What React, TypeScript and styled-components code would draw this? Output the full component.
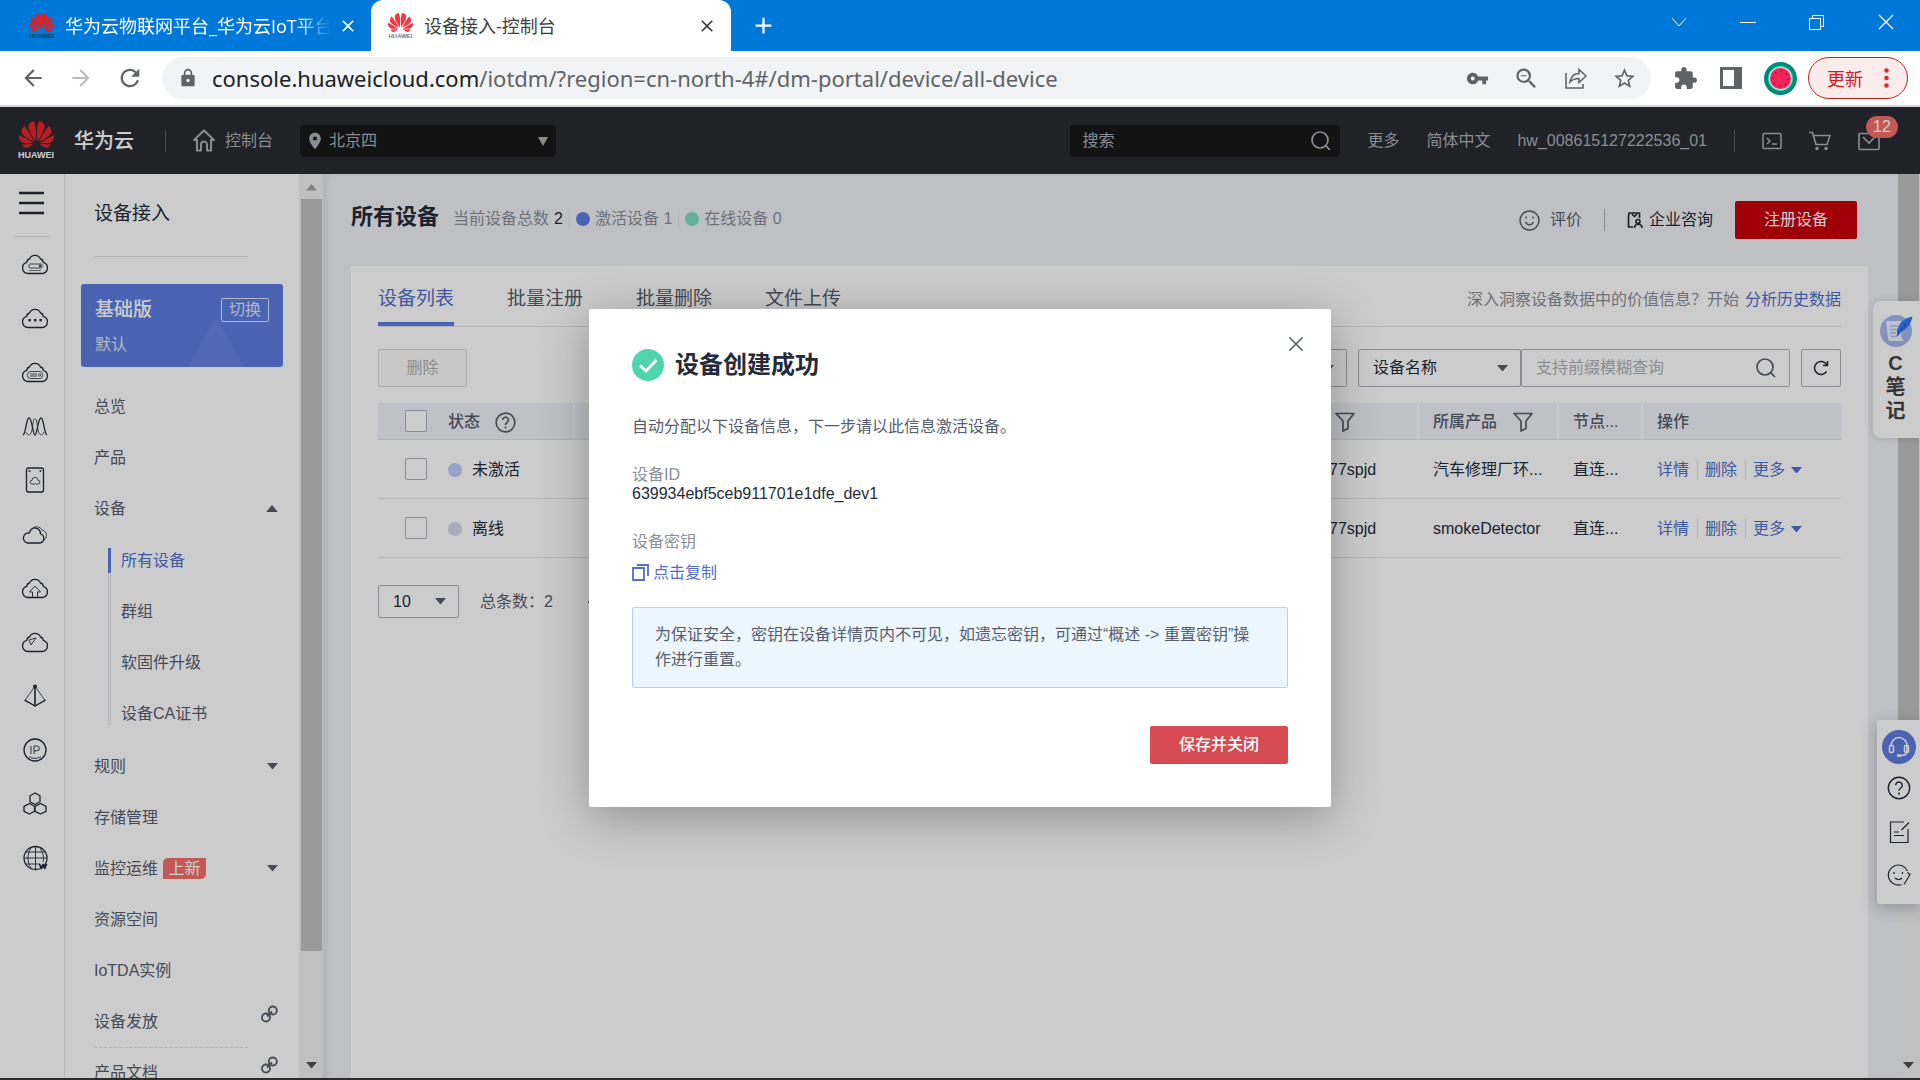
import React from 'react';
import styled, { createGlobalStyle } from 'styled-components';
import { MdVpnKey, MdStarOutline, MdExtension, MdLock, MdArrowBack, MdArrowForward, MdRefresh, MdOutlineZoomOut, MdLocationOn, MdClose, MdAdd } from 'react-icons/md';
import { SiHuawei } from 'react-icons/si';

const color = {
  ink: '#252b3a',
  text: '#575d6c',
  muted: '#8a8e99',
  line: '#dfe1e6',
  border: '#adb0b8',
  brand: '#5e7ce0',
  link: '#526ecc',
  red: '#c7000b',
  canvas: '#eff1f6',
  nav: '#282b33',
  navText: '#adb0b8',
};

const Global = createGlobalStyle`
  * { box-sizing: border-box; }
  body {
    margin: 0;
    overflow: hidden;
    font-family: "Liberation Sans", Arial, "Noto Sans CJK SC", sans-serif;
    font-size: 16px;
    line-height: 20px;
    color: ${color.text};
  }
  button, input, select { font: inherit; color: inherit; }
  button { margin: 0; padding: 0; border: 0; background: none; cursor: pointer; }
  a { color: inherit; text-decoration: none; }
  h1, h2, p, ul, dl, dd { margin: 0; padding: 0; }
  ul { list-style: none; }
  svg { display: block; flex: none; }
`;

const Page = styled.div`
  display: flex;
  flex-direction: column;
  height: 100vh;
  background: #2b2b2b;
  padding-bottom: 2px;
`;

/* ---------- browser chrome ---------- */
const TabStrip = styled.div`
  flex: none;
  display: flex;
  height: 51px;
  background: #0078d9;
  color: #fff;
  font-family: "Open Sans", "Noto Sans CJK SC", sans-serif;
  font-size: 18px;
`;
const BrowserTab = styled.div<{ $active?: boolean }>`
  display: flex;
  align-items: center;
  width: ${p => (p.$active ? 360 : 371)}px;
  padding: 0 ${p => (p.$active ? 14 : 13)}px 0 ${p => (p.$active ? 17 : 29)}px;
  border-radius: 12px 12px 0 0;
  background: ${p => (p.$active ? '#fff' : 'transparent')};
  color: ${p => (p.$active ? '#3c4043' : '#fff')};
`;
const TabTitle = styled.span<{ $fade?: boolean }>`
  flex: 1;
  min-width: 0;
  margin: 0 8px 0 11px;
  overflow: hidden;
  white-space: nowrap;
  line-height: 28px;
  ${p => p.$fade && 'mask-image: linear-gradient(90deg, #000 88%, transparent);'}
`;
const Favicon = styled.span<{ $dark?: boolean }>`
  display: flex;
  flex-direction: column;
  align-items: center;
  width: 25px;
  color: ${p => (p.$dark ? '#e02020' : '#f8343f')};
  font: bold 6px/6px "Liberation Sans", Arial, sans-serif;
  svg { margin: -3px 0 -2px; }
  span { color: ${p => (p.$dark ? '#123a66' : '#777')}; }
`;
const NewTab = styled.button`
  width: 64px;
  display: grid;
  place-items: center;
`;
const WindowControls = styled.div`
  margin-left: auto;
  display: flex;
  padding: 0 26px 8px 0;
  gap: 53px;
  align-items: center;
  button { width: 16px; }
`;
const Toolbar = styled.div`
  flex: none;
  display: flex;
  align-items: center;
  height: 56px;
  padding: 0 12px 0 20px;
  border-bottom: 2px solid #d5d6d8;
  background: #fff;
  color: #5f6368;
`;
const NavButtons = styled.div`
  display: flex;
  gap: 22px;
  width: 142px;
  button:nth-child(2) { color: #bbbdc0; }
`;
const AddressBar = styled.div`
  flex: 1;
  display: flex;
  align-items: center;
  height: 42px;
  padding: 0 14px 0 16px;
  border-radius: 21px;
  background: #f1f3f4;
`;
const Url = styled.div`
  flex: 1;
  margin-left: 14px;
  font: 22px/30px "Noto Sans", "Open Sans", sans-serif;
  white-space: nowrap;
  b { font-weight: 400; color: #202124; }
`;
const AddressIcons = styled.div`
  display: flex;
  gap: 24px;
`;
const ToolbarIcons = styled.div`
  display: flex;
  align-items: center;
  gap: 22px;
  padding: 0 11px 0 22px;
`;
const UpdateButton = styled.button`
  display: flex;
  align-items: center;
  justify-content: space-between;
  width: 100px;
  height: 42px;
  padding: 0 18px;
  border: 1px solid #c5221f;
  border-radius: 21px;
  background: #f9eceb;
  color: #c5221f;
  font-family: "Noto Sans CJK SC", sans-serif;
  font-size: 18px;
`;

/* ---------- console header ---------- */
const Console = styled.div`
  flex: 1;
  min-height: 0;
  position: relative;
  display: flex;
  flex-direction: column;
  overflow: hidden;
`;
const TopNav = styled.header`
  flex: none;
  display: flex;
  align-items: center;
  height: 67px;
  padding: 0 40px 0 18px;
  background: ${color.nav};
  color: ${color.navText};
`;
const Logo = styled.a`
  display: flex;
  flex-direction: column;
  align-items: center;
  width: 36px;
  color: #e8252b;
  font: bold 9px/11px "Liberation Sans", Arial, sans-serif;
  svg { margin: -4px 0 -2px; }
  span { color: #fff; }
`;
const BrandName = styled.span`
  margin: 0 31px 0 20px;
  color: #fff;
  font-size: 20px;
  font-weight: 500;
`;
const NavDivider = styled.span`
  width: 1px;
  height: 22px;
  background: #575d6c;
`;
const HomeLink = styled.a`
  display: flex;
  align-items: center;
  gap: 10px;
  margin: 0 27px 0 27px;
`;
const DarkBox = styled.label<{ $width: number; $end?: boolean }>`
  display: flex;
  align-items: center;
  width: ${p => p.$width}px;
  height: 32px;
  margin-left: ${p => (p.$end ? 'auto' : '0')};
  padding: 0 8px 0 ${p => (p.$end ? 8 : 5)}px;
  border-radius: 3px;
  background: #181818;
  input, select {
    flex: 1;
    min-width: 0;
    padding: 0 4px;
    border: 0;
    outline: 0;
    background: none;
    appearance: none;
  }
  input::placeholder { color: ${color.navText}; opacity: 1; }
`;
const TopLinks = styled.nav`
  display: flex;
  align-items: center;
  gap: 27px;
  margin-left: 27px;
`;
const TopIcons = styled.div`
  display: flex;
  gap: 27px;
`;
const MailButton = styled.button`
  position: relative;
`;
const Count = styled.span`
  position: absolute;
  left: 8px;
  top: -15px;
  width: 32px;
  border-radius: 11px;
  background: #f66f6a;
  color: #fff;
  line-height: 22px;
`;

/* ---------- workspace ---------- */
const Workspace = styled.div`
  flex: 1;
  min-height: 0;
  display: flex;
  background: ${color.canvas};
`;
const Rail = styled.nav`
  flex: none;
  width: 65px;
  border-right: 1px solid ${color.line};
  background: #fff;
  color: ${color.ink};
`;
const RailTop = styled.div`
  display: flex;
  align-items: center;
  height: 63px;
  width: 38px;
  margin-left: 13px;
  padding: 0 6px 4px;
  border-bottom: 1px solid ${color.line};
`;
const RailLink = styled.a`
  display: flex;
  align-items: center;
  height: 54px;
  padding-left: 21px;
`;
const Sidebar = styled.aside`
  flex: none;
  width: 234px;
  overflow: hidden;
  padding: 0 16px;
  background: #fff;
`;
const SideTitle = styled.h2`
  width: 154px;
  margin: 0 13px 27px;
  padding: 26px 0 29px;
  border-bottom: 1px solid ${color.line};
  color: ${color.ink};
  font-size: 19px;
  font-weight: 400;
  line-height: 27px;
`;
const EditionCard = styled.section`
  display: grid;
  grid-template-columns: 1fr auto;
  align-items: center;
  row-gap: 12px;
  height: 83px;
  padding: 13px 14px 11px;
  border-radius: 3px;
  background:
    linear-gradient(to top left, #6783e2 50%, transparent 50%) 107px 100% / 28px 50px no-repeat,
    linear-gradient(to top right, #6783e2 50%, transparent 50%) 135px 100% / 28px 50px no-repeat,
    ${color.brand};
  color: #dfe5f9;
  strong { font-size: 19px; font-weight: 500; color: #fff; line-height: 24px; }
  button { width: 48px; height: 24px; border: 1px solid #dfe5f9; border-radius: 2px; line-height: 20px; }
`;
const SideMenu = styled.ul`
  padding-top: 14px;
`;
const SideItem = styled.li`
  a, button {
    display: flex;
    align-items: center;
    width: 100%;
    height: 51px;
    padding: 0 5px 0 13px;
    text-align: left;
  }
  a svg, button svg { margin-left: auto; }
`;
const LinkIconBox = styled.span`
  margin-left: auto;
  align-self: flex-start;
  padding-top: 9px;
`;
const Dashed = styled.li`
  width: 154px;
  margin: 0 13px -1px;
  border-top: 1px dashed ${color.line};
`;
const SubMenu = styled.ul`
  margin: 1px 0 2px 27px;
`;
const SubItem = styled.li<{ $active?: boolean; $last?: boolean }>`
  a {
    display: block;
    height: 51px;
    padding-left: 13px;
    line-height: 51px;
    color: ${p => (p.$active ? color.link : 'inherit')};
    background:
      linear-gradient(${p => (p.$active ? color.brand : 'transparent')}, ${p => (p.$active ? color.brand : 'transparent')}) 0 13px / 3px 25px no-repeat,
      linear-gradient(90deg, ${color.line} 1px, transparent 1px 2px, ${color.line} 2px) 0 ${p => (p.$active ? '13px' : '0')} / 3px ${p => (p.$last ? '37px' : '100%')} no-repeat;
  }
`;
const NewTag = styled.span`
  margin-left: 5px;
  width: 43px;
  border-radius: 5px 0 5px 0;
  background: #f66f6a;
  color: #fff;
  text-align: center;
  line-height: 21px;
`;
const ScrollTrack = styled.div<{ $width: number; $arrow?: boolean }>`
  flex: none;
  display: flex;
  flex-direction: column;
  align-items: center;
  width: ${p => p.$width}px;
  padding: ${p => (p.$arrow ? 10 : 0)}px 0 9px;
  background: #f1f1f1;
  color: #505050;
`;
const ScrollThumb = styled.div<{ $share: number; $gap?: number }>`
  flex: 0 0 ${p => p.$share}%;
  width: 21px;
  margin: ${p => p.$gap || 0}px 0 auto;
  background: #c1c1c1;
`;
const FadedArrow = styled.span`
  color: #a3a3a3;
`;

const Main = styled.main`
  flex: 1;
  min-width: 0;
  display: flex;
  flex-direction: column;
  padding: 0 29px 0 28px;
  box-shadow: inset 6px 0 8px -4px #d5d8e0;
`;
const PageHead = styled.div`
  flex: none;
  display: flex;
  align-items: center;
  height: 92px;
  h1 { margin: 0 14px 6px 0; color: ${color.ink}; font-size: 22px; line-height: 30px; font-weight: 700; }
`;
const Stat = styled.span`
  display: flex;
  align-items: center;
  gap: 5px;
  margin-bottom: 3px;
  color: ${color.muted};
  b { font-weight: 400; color: ${color.ink}; }
  & + & { margin-left: 6px; padding-left: 6px; border-left: 1px solid ${color.line}; }
`;
const Dot = styled.i<{ $color: string }>`
  width: 14px;
  height: 14px;
  border-radius: 50%;
  background: ${p => p.$color};
`;
const HeadActions = styled.div`
  display: flex;
  align-items: center;
  margin-left: auto;
  margin-right: 11px;
  gap: 22px;
`;
const IconText = styled.a<{ $gap: number; $dark?: boolean }>`
  display: flex;
  align-items: center;
  gap: ${p => p.$gap}px;
  color: ${p => (p.$dark ? color.ink : color.text)};
`;
const HeadDivider = styled.span`
  width: 1px;
  height: 22px;
  background: ${color.border};
`;
const RedButton = styled.button<{ $soft?: boolean }>`
  height: 38px;
  padding: 0 29px;
  border-radius: 2px;
  background: ${p => (p.$soft ? '#d64a52' : color.red)};
  color: #fff;
  font-weight: ${p => (p.$soft ? 500 : 400)};
`;
const Panel = styled.section`
  flex: 1;
  padding: 0 27px;
  background: #fff;
`;
const TabBar = styled.div`
  display: flex;
  height: 61px;
  gap: 53px;
  border-bottom: 1px solid ${color.line};
`;
const TabButton = styled.button<{ $active?: boolean }>`
  padding-top: 9px;
  border-bottom: 4px solid ${p => (p.$active ? color.brand : 'transparent')};
  color: ${p => (p.$active ? color.link : color.text)};
  font-size: 19px;
`;
const TabHint = styled.p`
  margin-left: auto;
  padding-top: 24px;
  color: ${color.muted};
  a { margin-left: 6px; color: ${color.link}; }
`;
const Actions = styled.div`
  display: flex;
  margin: 22px 0 16px;
`;
const BoxButton = styled.button<{ $width: number }>`
  display: grid;
  place-items: center;
  width: ${p => p.$width}px;
  height: 38px;
  border: 1px solid ${color.border};
  border-radius: 2px;
  color: ${color.ink};
  &:disabled { border-color: #d6d8dc; background: #fafafa; color: ${color.border}; }
`;
const Filters = styled.div`
  display: flex;
  margin-left: auto;
`;
const Field = styled.label<{ $width: number; $height?: number; $gap?: number }>`
  display: flex;
  align-items: center;
  width: ${p => p.$width}px;
  height: ${p => p.$height || 38}px;
  margin-right: ${p => p.$gap || 0}px;
  padding: 0 12px 0 14px;
  border: 1px solid ${color.border};
  border-radius: 2px;
  color: ${color.text};
  select, input {
    flex: 1;
    min-width: 0;
    padding: 0;
    border: 0;
    outline: 0;
    background: none;
    appearance: none;
    color: ${color.ink};
  }
  input::placeholder { color: ${color.border}; opacity: 1; }
`;
const DeviceTable = styled.table`
  width: 100%;
  table-layout: fixed;
  border-collapse: separate;
  border-spacing: 0;
  th, td { padding: 2px 14px 0; border-bottom: 1px solid ${color.line}; text-align: left; white-space: nowrap; }
  th { height: 37px; border-right: 2px solid #fafafc; background: #f1f2fb; font-weight: 500; }
  th:first-child, th:last-child { border-right: 0; }
  td { height: 59px; color: ${color.ink}; }
  th:first-child, td:first-child { padding: 0 0 0 27px; }
  th:nth-child(2), td:nth-child(2) { padding-left: 16px; }
  th:nth-child(4), td:nth-child(4) { padding-left: 16px; }
`;
const Check = styled.input.attrs({ type: 'checkbox' })`
  display: block;
  appearance: none;
  width: 22px;
  height: 22px;
  margin: 0;
  border: 1px solid ${color.border};
  border-radius: 2px;
  background: #fff;
`;
const Inline = styled.span<{ $gap: number; $pad?: number }>`
  display: flex;
  align-items: center;
  gap: ${p => p.$gap}px;
  padding-left: ${p => p.$pad || 0}px;
`;
const RowLinks = styled.div`
  display: flex;
  align-items: center;
  color: ${color.link};
  a, button { display: flex; align-items: center; gap: 6px; }
  a { margin-right: 7px; padding-right: 8px; border-right: 1px solid ${color.line}; }
`;
const Pager = styled.div`
  display: flex;
  align-items: center;
  gap: 21px;
  margin-top: 27px;
`;

/* ---------- floating widgets ---------- */
const NotesWidget = styled.button`
  position: absolute;
  right: 0;
  top: 194px;
  display: flex;
  flex-direction: column;
  align-items: center;
  width: 47px;
  height: 137px;
  padding: 13px 2px 0 0;
  border-radius: 8px 0 0 8px;
  background: #fff;
  box-shadow: 0 0 10px rgba(0, 0, 0, 0.16);
  color: #444;
  font-size: 20px;
  font-weight: 700;
  line-height: 24px;
  span { padding-top: 3px; width: 20px; }
`;
const SupportWidget = styled.div`
  position: absolute;
  right: 0;
  top: 613px;
  display: flex;
  flex-direction: column;
  align-items: center;
  gap: 20px;
  width: 43px;
  height: 184px;
  padding-top: 10px;
  border-radius: 2px 0 0 2px;
  background: #fff;
  box-shadow: 0 4px 16px rgba(37, 43, 58, 0.3);
  color: ${color.ink};
  button:first-child { display: grid; place-items: center; width: 34px; height: 34px; margin-bottom: -8px; border-radius: 50%; background: ${color.brand}; color: #fff; }
`;

/* ---------- dialog ---------- */
const Backdrop = styled.div`
  position: absolute;
  inset: 0;
  display: flex;
  align-items: flex-start;
  justify-content: center;
  padding-top: 202px;
  background: rgba(0, 0, 0, 0.2);
`;
const Dialog = styled.section`
  display: flex;
  flex-direction: column;
  width: 742px;
  padding: 27px 43px 43px;
  border-radius: 2px;
  background: #fff;
  box-shadow: 0 10px 50px rgba(0, 0, 0, 0.3);
  h2 { display: flex; align-items: center; gap: 11px; color: ${color.ink}; font-size: 24px; line-height: 32px; }
`;
const CloseButton = styled.button`
  align-self: flex-end;
  margin: 0 -16px -3px 0;
`;
const Info = styled.dl`
  margin: 28px 0 25px;
  dt { color: ${color.muted}; line-height: 19px; }
  dd { margin-bottom: 29px; color: ${color.ink}; line-height: 19px; }
  dd:last-child { margin: 12px 0 0; }
`;
const CopyButton = styled.button`
  display: flex;
  align-items: center;
  gap: 4px;
  color: ${color.link};
`;
const Lead = styled.p`
  margin-top: 36px;
`;
const Notice = styled.p`
  padding: 14px 22px 15px;
  border: 1px solid #beccfa;
  border-radius: 2px;
  background: #ebf6ff;
  line-height: 25px;
`;
const DialogFoot = styled.div`
  display: flex;
  justify-content: flex-end;
  margin-top: 38px;
`;

/* ---------- icons ---------- */
const Caret = ({ up, size = 11 }: { up?: boolean; size?: number }) => (
  <svg width={size} height={size * 0.6} viewBox="0 0 10 6" fill="currentColor">
    <path d={up ? 'M0 6 5 0l5 6z' : 'M0 0h10L5 6z'} />
  </svg>
);

const Line = ({ size = 28, w = 1.3, children }: { size?: number; w?: number; children: React.ReactNode }) => (
  <svg width={size} height={size} viewBox="0 0 28 28" fill="none" stroke="currentColor" strokeWidth={w} strokeLinejoin="round">
    {children}
  </svg>
);
const Magnifier = ({ size = 22 }: { size?: number }) => (
  <svg width={size} height={size} viewBox="0 0 22 22" fill="none" stroke="currentColor" strokeWidth="1.7">
    <circle cx="10" cy="10" r="8" />
    <path d="m15.500 15.500 4.500 4.500" />
  </svg>
);
const Funnel = () => (
  <svg width="20" height="20" viewBox="0 0 20 20" fill="none" stroke="currentColor" strokeWidth="1.7" strokeLinejoin="round">
    <path d="M1 1.500h18l-6 7.500v7.500l-5 2.500V9z" />
  </svg>
);
const Help = ({ size = 21, w = 1.7 }: { size?: number; w?: number }) => (
  <svg width={size} height={size} viewBox="0 0 22 22" fill="none" stroke="currentColor" strokeWidth={w}>
    <circle cx="11" cy="11" r="9.800" />
    <path d="M8 8.500a3 3 0 1 1 4.600 2.500c-1 .7-1.600 1.200-1.600 2.500M11 15.200v2" />
  </svg>
);
const Chain = () => (
  <svg width="17" height="18" viewBox="0 0 17 18" fill="none" stroke="currentColor" strokeWidth="1.800">
    <circle cx="11.800" cy="5.500" r="4" />
    <circle cx="5" cy="12.500" r="4" />
    <path d="m6 11.500 5-5" />
  </svg>
);

const cloud = 'M7 23.500h14a5.700 5.700 0 0 0 1.200-11.200A3.500 3.500 0 0 0 19.500 9a6 6 0 0 0-11 0A3.500 3.500 0 0 0 5.800 12.300 5.700 5.700 0 0 0 7 23.500z';
const railIcons: { name: string; art: React.ReactNode }[] = [
  { name: '弹性云服务器', art: <><path d={cloud} /><rect x="8" y="14" width="13" height="4" rx="1" strokeWidth=".8" /><path d="M8 20.500h12" strokeWidth=".6" /><circle cx="19" cy="16" r=".5" /></> },
  { name: '云', art: <><path d={cloud} /><g fill="currentColor" stroke="none"><rect x="7.500" y="15" width="2.400" height="2.400" /><rect x="13" y="15" width="2.400" height="2.400" /><rect x="18.500" y="15" width="2.400" height="2.400" /></g></> },
  { name: '裸金属', art: <><path d={cloud} /><rect x="6.500" y="13.500" width="15" height="7" rx="3" strokeWidth=".8" /><path d="M9 16h7M9 18h7" strokeWidth=".8" /><circle cx="18.500" cy="17" r="1.200" strokeWidth=".8" /></> },
  { name: '伸缩', art: <><path d="M2 23c3-1 3-17 6-17s4 17 6 17 3-17 6-17 3 16 6 17" /><path d="M5 20c1 4 5 4 6-2s1-11 3-11 2 5 3 11 5 6 6 2" strokeWidth=".8" /></> },
  { name: '硬盘', art: <><rect x="5.500" y="2" width="17" height="24" rx="2" /><path d="M11 18h6a1.800 1.800 0 0 0 0-3.700 3 3 0 0 0-6 0 1.800 1.800 0 0 0 0 3.700z" strokeWidth=".8" /><path d="M7.500 5h2M18.500 5h2" /></> },
  { name: '网络', art: <><path d="M6.500 23h12a4.600 4.600 0 0 0 1-9 5.500 5.500 0 0 0-11-1A5 5 0 0 0 6.500 23z" /><path d="M11 9a6 6 0 0 1 10 1c5 1 6 7 2 10" strokeWidth=".8" /></> },
  { name: '备份', art: <><path d={cloud} /><path d="M11.500 23v-5H8.500L14 12l5.500 6h-3v5" strokeWidth=".9" /></> },
  { name: '分发', art: <><path d={cloud} /><path d="m8 12 7-2-5 7z" strokeWidth=".9" /></> },
  { name: '引擎', art: <><path d="M14 4 4 18.500l10 5.500 10-5.500z" strokeWidth=".8" /><path d="M14 4v20" strokeWidth="1.600" /><circle cx="14" cy="4.500" r="1.300" fill="currentColor" /><path d="m3.500 18 10.500 6 10.500-6" /></> },
  { name: '弹性公网', art: <><circle cx="14" cy="14" r="11" /><path d="M10 10v8M13 18v-8h3a2.400 2.400 0 0 1 0 4.800h-3M8 20.500c4 2.500 8 2.500 12 0" strokeWidth=".9" /></> },
  { name: '集群', art: <><path d="M14 3l5 2.800v6L14 14.500 9 11.800v-6zM8.500 13.500l5 2.800v5L8.500 24l-5.500-2.700v-5zM19.500 13.500l5.500 2.800v5L19.500 24l-5.500-2.700v-5z" /></> },
  { name: '域名', art: <><circle cx="14.500" cy="14" r="11.500" /><path d="M14.500 2.500v23M3 14h23M5 8h19M5 20h14M10 4c-4 6-4 14 0 20M19 4c3.500 5 4 10 3 14" strokeWidth=".9" /><path d="m18.500 20 1.800 4.500 1.700-4 1.700 4 1.800-4.500" strokeWidth="1.800" /></> },
];

const before = ['总览', '产品'];
const children = ['所有设备', '群组', '软固件升级', '设备CA证书'];
const deviceRows = [
  { status: '未激活', dot: '#beccfa', id: '77spjd', product: '汽车修理厂环...', node: '直连...' },
  { status: '离线', dot: '#d3d9e6', id: '77spjd', product: 'smokeDetector', node: '直连...' },
];

function BrowserChrome() {
  return (
    <>
      <TabStrip>
        <BrowserTab>
          <Favicon $dark><SiHuawei size={25} /><span>HUAWEI</span></Favicon>
          <TabTitle $fade>华为云物联网平台_华为云IoT平台</TabTitle>
          <button aria-label="关闭标签页"><MdClose size={20} /></button>
        </BrowserTab>
        <BrowserTab $active>
          <Favicon><SiHuawei size={25} /><span>HUAWEI</span></Favicon>
          <TabTitle>设备接入-控制台</TabTitle>
          <button aria-label="关闭标签页"><MdClose size={20} /></button>
        </BrowserTab>
        <NewTab aria-label="新标签页"><MdAdd size={27} /></NewTab>
        <WindowControls>
          <button aria-label="标签搜索"><svg width="16" height="16" viewBox="0 0 16 16" fill="none" stroke="#fff"><path d="m1 4 7 8 7-8" /></svg></button>
          <button aria-label="最小化"><svg width="16" height="16" viewBox="0 0 16 16" stroke="#fff"><path d="M0 8.500h16" /></svg></button>
          <button aria-label="还原"><svg width="16" height="16" viewBox="0 0 16 16" fill="none" stroke="#fff"><path d="M.5 4.500h11v11H.5zM3.500 4.500v-3h11v11h-3" /></svg></button>
          <button aria-label="关闭"><svg width="16" height="16" viewBox="0 0 16 16" stroke="#fff" strokeWidth="1.200"><path d="m1 1 14 14M15 1 1 15" /></svg></button>
        </WindowControls>
      </TabStrip>
      <Toolbar>
        <NavButtons>
          <button aria-label="后退"><MdArrowBack size={26} /></button>
          <button aria-label="前进"><MdArrowForward size={26} /></button>
          <button aria-label="刷新"><MdRefresh size={28} /></button>
        </NavButtons>
        <AddressBar>
          <MdLock size={20} />
          <Url><b>console.huaweicloud.com</b>/iotdm/?region=cn-north-4#/dm-portal/device/all-device</Url>
          <AddressIcons>
            <button aria-label="密码"><MdVpnKey size={23} /></button>
            <button aria-label="缩放"><MdOutlineZoomOut size={27} /></button>
            <button aria-label="分享">
              <svg width="24" height="24" viewBox="0 0 24 24" fill="none" stroke="currentColor" strokeWidth="1.600"><path d="M2 7v15h17v-4M6 16c1-6 4-8.500 9-8.500V3.500l7 6.500-7 6.500v-4c-4 0-6.500.8-9 3.500z" /></svg>
            </button>
            <button aria-label="收藏"><MdStarOutline size={25} /></button>
          </AddressIcons>
        </AddressBar>
        <ToolbarIcons>
          <button aria-label="扩展程序"><MdExtension size={25} /></button>
          <button aria-label="侧边栏"><svg width="22" height="22" viewBox="0 0 22 22" fill="currentColor"><path fillRule="evenodd" d="M0 0h22v22H0zM3 3v16h11V3z" /></svg></button>
          <button aria-label="用户">
            <svg width="33" height="33" viewBox="0 0 33 33"><circle cx="16.500" cy="16.500" r="16.500" fill="#00897b" /><circle cx="16.500" cy="16.500" r="12.500" fill="#1de9b6" /><circle cx="16.500" cy="16.500" r="11.500" fill="#f6d5dc" /><circle cx="16.500" cy="16.500" r="10.500" fill="#f0245a" /><circle cx="16.500" cy="16.500" r="7.500" fill="none" stroke="#5a1028" strokeWidth="1.300" strokeDasharray="1.200 4.690" /></svg>
          </button>
        </ToolbarIcons>
        <UpdateButton>更新<svg width="5" height="20" viewBox="0 0 5 20" fill="#d93025"><circle cx="2.500" cy="2.500" r="2.300" /><circle cx="2.500" cy="10" r="2.300" /><circle cx="2.500" cy="17.500" r="2.300" /></svg></UpdateButton>
      </Toolbar>
    </>
  );
}

function ConsoleHeader() {
  return (
    <TopNav>
      <Logo href="#"><SiHuawei size={35} /><span>HUAWEI</span></Logo>
      <BrandName>华为云</BrandName>
      <NavDivider />
      <HomeLink href="#">
        <svg width="22" height="23" viewBox="0 0 22 23" fill="none" stroke="currentColor" strokeWidth="2" strokeLinejoin="round"><path d="M1 11 11 1.500 21 11h-3v10.500h-4V15.500a3 3 0 0 0-6 0v6H4V11z" /></svg>
        控制台
      </HomeLink>
      <DarkBox $width={256}>
        <MdLocationOn size={20} />
        <select aria-label="区域"><option>北京四</option></select>
        <svg width="10" height="10" viewBox="0 0 10 10" fill="currentColor"><path d="M0 1h10L5 10z" /></svg>
      </DarkBox>
      <DarkBox $width={270} $end>
        <input aria-label="搜索" placeholder="搜索" />
        <Magnifier />
      </DarkBox>
      <TopLinks>
        <a href="#">更多</a>
        <a href="#">简体中文</a>
        <a href="#">hw_008615127222536_01</a>
        <NavDivider />
        <TopIcons>
          <button aria-label="命令行"><svg width="20" height="20" viewBox="0 0 20 20" fill="none" stroke="currentColor" strokeWidth="1.500"><rect x="1" y="2.500" width="18" height="15" rx="1" /><path d="m5 7 3 3-3 3M10 13h5" /></svg></button>
          <button aria-label="购物车"><svg width="22" height="20" viewBox="0 0 22 20" fill="none" stroke="currentColor" strokeWidth="1.600"><path d="M0 1.500h3.500L7 13.500h11L21 4.500H5" /><circle cx="8" cy="17.500" r="1" fill="currentColor" /><circle cx="17" cy="17.500" r="1" fill="currentColor" /></svg></button>
          <MailButton aria-label="消息">
            <svg width="22" height="20" viewBox="0 0 22 20" fill="none" stroke="currentColor" strokeWidth="1.600"><rect x="1" y="2.500" width="20" height="16" rx="1" /><path d="m5 6 6 6 6-6" /></svg>
            <Count>12</Count>
          </MailButton>
        </TopIcons>
      </TopLinks>
    </TopNav>
  );
}

function SideNav() {
  return (
    <Sidebar>
      <SideTitle>设备接入</SideTitle>
      <EditionCard>
        <strong>基础版</strong>
        <button>切换</button>
        <span>默认</span>
      </EditionCard>
      <SideMenu>
        {before.map(t => <SideItem key={t}><a href="#">{t}</a></SideItem>)}
        <SideItem>
          <button>设备<Caret up size={12} /></button>
          <SubMenu>
            {children.map((t, i) => (
              <SubItem key={t} $active={i === 0} $last={i === children.length - 1}><a href="#">{t}</a></SubItem>
            ))}
          </SubMenu>
        </SideItem>
        <SideItem><button>规则<Caret size={11} /></button></SideItem>
        <SideItem><a href="#">存储管理</a></SideItem>
        <SideItem><button>监控运维<NewTag>上新</NewTag><Caret size={11} /></button></SideItem>
        <SideItem><a href="#">资源空间</a></SideItem>
        <SideItem><a href="#">IoTDA实例</a></SideItem>
        <SideItem><a href="#">设备发放<LinkIconBox><Chain /></LinkIconBox></a></SideItem>
        <Dashed />
        <SideItem><a href="#">产品文档<LinkIconBox><Chain /></LinkIconBox></a></SideItem>
      </SideMenu>
    </Sidebar>
  );
}

function DevicePage() {
  return (
    <Main>
      <PageHead>
        <h1>所有设备</h1>
        <Stat>当前设备总数 <b>2</b></Stat>
        <Stat><Dot $color={color.brand} />激活设备 1</Stat>
        <Stat><Dot $color="#7adfc0" />在线设备 0</Stat>
        <HeadActions>
          <IconText href="#" $gap={10}>
            <svg width="21" height="21" viewBox="0 0 21 21" fill="none" stroke="currentColor" strokeWidth="1.500"><circle cx="10.500" cy="10.500" r="9.500" /><path d="M6.500 12c1.500 3.500 6.500 3.500 8 0M7 6.500v2M14 6.500v2" /></svg>
            评价
          </IconText>
          <HeadDivider />
          <IconText href="#" $gap={6} $dark>
            <svg width="16" height="16" viewBox="0 0 16 16" fill="none" stroke="currentColor" strokeWidth="1.700"><path d="M6 15H1.500V4.500L2 1h10.500v5M5 2l2.500 2.500L10 2" /><circle cx="11" cy="9.500" r="2" /><path d="M7.500 16c0-5 7.500-5 7.500 0" /></svg>
            企业咨询
          </IconText>
          <RedButton>注册设备</RedButton>
        </HeadActions>
      </PageHead>
      <Panel>
        <TabBar>
          <TabButton $active>设备列表</TabButton>
          <TabButton>批量注册</TabButton>
          <TabButton>批量删除</TabButton>
          <TabButton>文件上传</TabButton>
          <TabHint>深入洞察设备数据中的价值信息？开始<a href="#">分析历史数据</a></TabHint>
        </TabBar>
        <Actions>
          <BoxButton $width={89} disabled>删除</BoxButton>
          <Filters>
            <Field $width={160} $gap={11}><select aria-label="状态"><option /></select><Caret /></Field>
            <Field $width={163}><select aria-label="查询条件"><option>设备名称</option></select><Caret /></Field>
            <Field $width={269} $gap={11}><input aria-label="查询" placeholder="支持前缀模糊查询" /><Magnifier /></Field>
            <BoxButton $width={40} aria-label="刷新列表">
              <svg width="16" height="16" viewBox="0 0 16 16" fill="none" stroke="currentColor" strokeWidth="1.500"><path d="M13.500 11.500A6.500 6.500 0 1 1 13.500 4.500M14.500 1v4.500H10" /></svg>
            </BoxButton>
          </Filters>
        </Actions>
        <DeviceTable>
          <colgroup>
            <col width="54" /><col width="143" /><col /><col width="106" /><col width="140" /><col width="84" /><col width="198" />
          </colgroup>
          <thead>
            <tr>
              <th><Check aria-label="全选" /></th>
              <th><Inline $gap={15}>状态<Help /></Inline></th>
              <th />
              <th><Inline $gap={0} $pad={6}><Funnel /></Inline></th>
              <th><Inline $gap={16}>所属产品<Funnel /></Inline></th>
              <th>节点...</th>
              <th>操作</th>
            </tr>
          </thead>
          <tbody>
            {deviceRows.map(r => (
              <tr key={r.status}>
                <td><Check aria-label={r.status} /></td>
                <td><Inline $gap={10}><Dot $color={r.dot} />{r.status}</Inline></td>
                <td />
                <td>{r.id}</td>
                <td>{r.product}</td>
                <td>{r.node}</td>
                <td><RowLinks><a href="#">详情</a><a href="#">删除</a><button>更多<Caret /></button></RowLinks></td>
              </tr>
            ))}
          </tbody>
        </DeviceTable>
        <Pager>
          <Field $width={81} $height={33}><select aria-label="每页条数"><option>10</option></select><Caret /></Field>
          <span>总条数：2</span>
          <svg width="24" height="10" viewBox="0 0 24 10" fill="none" stroke="currentColor"><path d="M18 1l-4 4 4 4" /></svg>
        </Pager>
      </Panel>
    </Main>
  );
}

function Widgets() {
  return (
    <>
      <NotesWidget>
        <svg width="34" height="34" viewBox="0 0 34 34"><circle cx="17" cy="17" r="16" fill="#a3b9ee" /><path d="M7 7h15v16l3 4H12c-3 0-3-2-3-4z" fill="#eef3ff" /><path d="M11 12h8M11 15.500h7M11 19h6M12 22.500h6" stroke="#a9bff0" strokeWidth="1.300" /><path d="M18 21c-1-8 5-17 15.500-18.500C32 10 28 16 21 18z" fill="#3078f0" /><path d="m18 22 9-12" stroke="#3355d8" strokeWidth="1.300" /></svg>
        <span>C笔记</span>
      </NotesWidget>
      <SupportWidget>
        <button aria-label="在线客服"><svg width="22" height="22" viewBox="0 0 22 22" fill="none" stroke="currentColor" strokeWidth="1.600"><path d="M3 10a8 8.500 0 0 1 16 0v5c0 3-2 4.500-6 4.500" /><rect x="1.500" y="9.500" width="4" height="7" rx="1.500" /><rect x="16.500" y="9.500" width="4" height="7" rx="1.500" /><path d="M9 19.500h4" strokeWidth="2.500" /></svg></button>
        <button aria-label="帮助"><Help size={24} w={1.3} /></button>
        <button aria-label="反馈"><svg width="22" height="24" viewBox="0 0 22 24" fill="none" stroke="currentColor" strokeWidth="1.200"><path d="M16 2H2.500v20.500H20V9M21 2.500l-7.500 7.500M6 12h5M6 15.500h10" /></svg></button>
        <button aria-label="评价"><svg width="24" height="22" viewBox="0 0 24 22" fill="none" stroke="currentColor" strokeWidth="1.200"><path d="M20.500 7a10 10 0 1 0-6 13.500M17 20.500l6-10-2.500-2" /><path d="M8 14c2 1.800 5 1.800 7 0M7 8v2M15.500 8v2" /></svg></button>
      </SupportWidget>
    </>
  );
}

function SuccessDialog() {
  return (
    <Backdrop>
      <Dialog role="dialog" aria-labelledby="dialog-title">
        <CloseButton aria-label="关闭对话框"><svg width="16" height="16" viewBox="0 0 16 16" stroke="#575d6c" strokeWidth="1.600"><path d="m1.500 1.500 13 13M14.500 1.500l-13 13" /></svg></CloseButton>
        <h2 id="dialog-title">
          <svg width="32" height="32" viewBox="0 0 32 32"><circle cx="16" cy="16" r="16" fill="#50d4ab" /><path d="m8 16.500 6 5.500L24.500 11" fill="none" stroke="#fff" strokeWidth="2.800" /></svg>
          设备创建成功
        </h2>
        <Lead>自动分配以下设备信息，下一步请以此信息激活设备。</Lead>
        <Info>
          <dt>设备ID</dt>
          <dd>639934ebf5ceb911701e1dfe_dev1</dd>
          <dt>设备密钥</dt>
          <dd>
            <CopyButton>
              <svg width="17" height="17" viewBox="0 0 17 17" fill="none" stroke="currentColor" strokeWidth="1.800"><path d="M1 4h11v12H1zM5 1h11v11" /></svg>
              点击复制
            </CopyButton>
          </dd>
        </Info>
        <Notice>为保证安全，密钥在设备详情页内不可见，如遗忘密钥，可通过“概述 -&gt; 重置密钥”操作进行重置。</Notice>
        <DialogFoot><RedButton $soft>保存并关闭</RedButton></DialogFoot>
      </Dialog>
    </Backdrop>
  );
}

export default function App() {
  return (
    <Page>
      <Global />
      <BrowserChrome />
      <Console>
        <ConsoleHeader />
        <Workspace>
          <Rail>
            <RailTop>
              <button aria-label="服务列表"><svg width="26" height="24" viewBox="0 0 26 24" stroke="currentColor" strokeWidth="2.400"><path d="M0 2h25M0 12h25M0 22h25" /></svg></button>
            </RailTop>
            {railIcons.map(i => <RailLink key={i.name} href="#" aria-label={i.name}><Line>{i.art}</Line></RailLink>)}
          </Rail>
          <SideNav />
          <ScrollTrack $width={24} $arrow>
            <FadedArrow><Caret up /></FadedArrow>
            <ScrollThumb $share={85} $gap={8} />
            <Caret />
          </ScrollTrack>
          <DevicePage />
          <ScrollTrack $width={23}>
            <ScrollThumb $share={61} />
            <Caret />
          </ScrollTrack>
        </Workspace>
        <Widgets />
        <SuccessDialog />
      </Console>
    </Page>
  );
}
